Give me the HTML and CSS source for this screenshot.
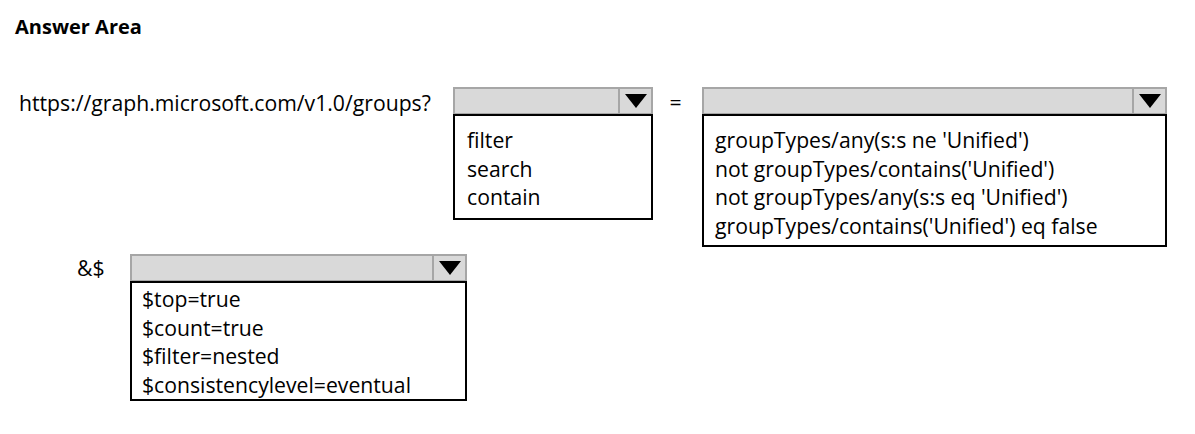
FILE: index.html
```html
<!DOCTYPE html>
<html>
<head>
<meta charset="utf-8">
<link rel="stylesheet" href="styles.css">
</head>
<body>
<div class="page">
  <div class="title">Answer Area</div>
  <div class="row row1">
    <div class="label url">https://graph.microsoft.com/v1.0/groups?</div>
    <div class="dd dd1">
      <div class="dd-head"><div class="dd-arrow"><span class="tri"></span></div></div>
      <div class="dd-list l1">
        <div>filter</div>
        <div>search</div>
        <div>contain</div>
      </div>
    </div>
    <div class="label eq">=</div>
    <div class="dd dd2">
      <div class="dd-head"><div class="dd-arrow"><span class="tri"></span></div></div>
      <div class="dd-list l2">
        <div>groupTypes/any(s:s ne 'Unified')</div>
        <div>not groupTypes/contains('Unified')</div>
        <div>not groupTypes/any(s:s eq 'Unified')</div>
        <div>groupTypes/contains('Unified') eq false</div>
      </div>
    </div>
  </div>
  <div class="row row2">
    <div class="label amp">&amp;$</div>
    <div class="dd dd3">
      <div class="dd-head"><div class="dd-arrow"><span class="tri"></span></div></div>
      <div class="dd-list l3">
        <div>$top=true</div>
        <div>$count=true</div>
        <div>$filter=nested</div>
        <div>$consistencylevel=eventual</div>
      </div>
    </div>
  </div>
</div>
</body>
</html>
```
FILE: styles.css
```css
html, body {
  margin: 0;
  background: #fff;
}
body {
  font-family: "Open Sans", "Noto Sans", sans-serif;
  color: #000;
  font-size: 21.2px;
}
.page {
  padding: 15px 0 0 15px;
}
.title {
  font-weight: bold;
  font-size: 20px;
  line-height: 24px;
}
.row {
  display: flex;
  align-items: flex-start;
}
.row1 {
  margin-top: 48px;
  padding-left: 4px;
}
.row2 {
  margin-top: 7px;
  padding-left: 62px;
}
.label {
  line-height: 28px;
  white-space: nowrap;
}
.url {
  width: 434px;
  padding-top: 2px;
}
.eq {
  width: 49px;
  text-align: center;
  padding-top: 1px;
  padding-right: 4px;
  box-sizing: border-box;
}
.amp {
  width: 53px;
  padding-top: 0;
}
.dd-head {
  height: 28px;
  box-sizing: border-box;
  background: #d9d9d9;
  border: 2px solid #a6a6a6;
  display: flex;
  justify-content: flex-end;
}
.dd-arrow {
  width: 31px;
  border-left: 2px solid #a6a6a6;
  display: flex;
  align-items: center;
  justify-content: center;
}
.tri {
  width: 0;
  height: 0;
  border-left: 11px solid transparent;
  border-right: 11px solid transparent;
  border-top: 14px solid #000;
}
.dd-list {
  border: 2px solid #000;
  margin-top: -1px;
  line-height: 28.5px;
}
.dd1 { width: 200px; }
.dd2 { width: 465px; }
.dd3 { width: 337px; }
.l1 { padding: 10px 12px 6px; }
.l2 { padding: 10px 11px 5px; }
.l3 { padding: 2px 10px 0; }
```
